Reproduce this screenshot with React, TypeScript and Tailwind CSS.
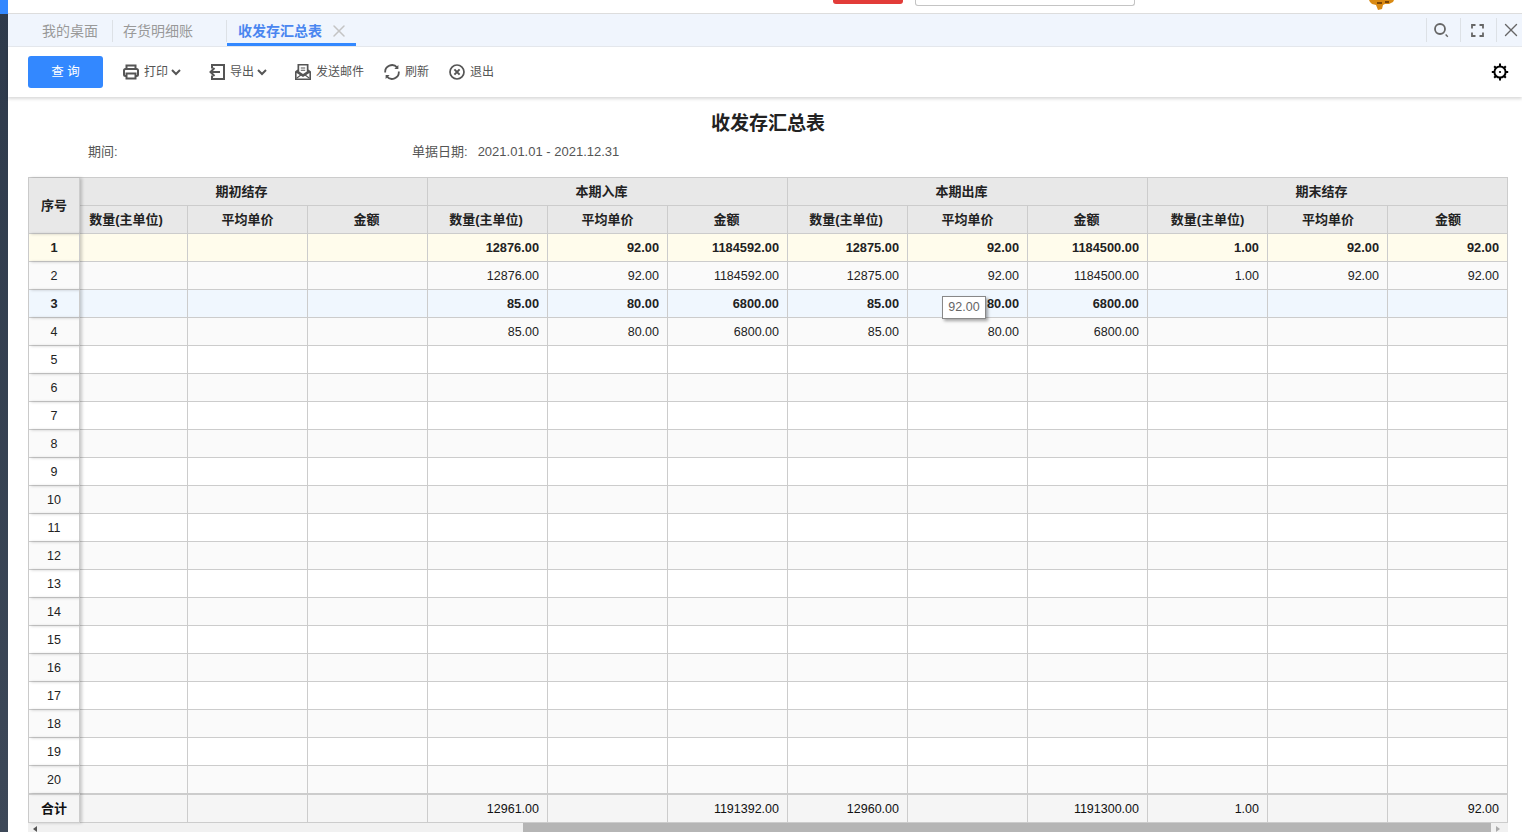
import { Fragment } from "react";
import { X } from "lucide-react";

const groups = [
  { name: "期初结存", pad: "pr-[24px]", subPad: ["pr-[15px]", "", "pr-[2px]"] },
  { name: "本期入库", pad: "pr-[12px]", subPad: ["pr-[3px]", "", "pr-[2px]"] },
  { name: "本期出库", pad: "pr-[12px]", subPad: ["pr-[3px]", "", "pr-[2px]"] },
  { name: "期末结存", pad: "pr-[12px]", subPad: ["", "pl-[1px]", "pl-[1px]"] },
];
const subCols = ["数量(主单位)", "平均单价", "金额"];

// 每行 12 列，空字符串表示无数据
const rows: Record<number, string[]> = {
  1: ["", "", "", "12876.00", "92.00", "1184592.00", "12875.00", "92.00", "1184500.00", "1.00", "92.00", "92.00"],
  2: ["", "", "", "12876.00", "92.00", "1184592.00", "12875.00", "92.00", "1184500.00", "1.00", "92.00", "92.00"],
  3: ["", "", "", "85.00", "80.00", "6800.00", "85.00", "80.00", "6800.00", "", "", ""],
  4: ["", "", "", "85.00", "80.00", "6800.00", "85.00", "80.00", "6800.00", "", "", ""],
};
const totals = ["", "", "", "12961.00", "", "1191392.00", "12960.00", "", "1191300.00", "1.00", "", "92.00"];
const emptyRow = Array(12).fill("");

function rowClass(n: number) {
  if (n === 1) return "bg-[#fffcec] font-bold text-[12.8px]";
  if (n === 3) return "bg-[#f0f7fe] font-bold text-[12.8px]";
  return n % 2 === 0 ? "bg-[#fafafa]" : "bg-white";
}

function PrintIcon() {
  return (
    <svg width="16" height="16" viewBox="0 0 16 16" fill="none" stroke="#555" strokeWidth="2">
      <path d="M3.5 5V1.5h9V5" />
      <rect x="1" y="5" width="14" height="7" rx="1.5" />
      <path d="M3.5 9.5h9v5h-9z" fill="#fff" />
    </svg>
  );
}

function ExportIcon() {
  return (
    <svg width="16" height="16" viewBox="0 0 16 16" fill="none" stroke="#555" strokeWidth="2">
      <path d="M3 4.5V1h12v14H3v-3.5" />
      <path d="M11 8H1.5M5.5 4 1.5 8l4 4" />
    </svg>
  );
}

function MailIcon() {
  return (
    <svg width="16" height="16" viewBox="0 0 16 16">
      <path d="M2.5 0h11v5.5L16 7.5V16H0V7.5l2.5-2z" fill="#555" />
      <path d="M4.2 1.6h7.6v6L8 10 4.2 7.6z" fill="#fff" />
      <path d="M1.6 9 8 13l6.4-4v5.4H1.6z" fill="#fff" />
      <path d="M1.6 14.2 6.2 10.8M14.4 14.2 9.8 10.8" stroke="#555" strokeWidth="1.1" />
      <path d="M5.8 4h4.4M5.8 6.2h4.4" stroke="#555" strokeWidth="1.1" />
    </svg>
  );
}

function RefreshIcon() {
  return (
    <svg width="16" height="16" viewBox="0 0 16 16" fill="none" stroke="#555" strokeWidth="1.8">
      <path d="M1.2 8.5A6.8 6.8 0 0 1 13.2 3.6" />
      <path d="M14.8 7.5A6.8 6.8 0 0 1 2.8 12.4" />
      <path d="M14.4 1v4h-4z" fill="#555" stroke="none" />
      <path d="M1.6 15v-4h4z" fill="#555" stroke="none" />
    </svg>
  );
}

function ExitIcon() {
  return (
    <svg width="16" height="16" viewBox="0 0 16 16" fill="none" stroke="#555">
      <circle cx="8" cy="8" r="7" strokeWidth="1.7" />
      <path d="M5.4 5.4l5.2 5.2M10.6 5.4l-5.2 5.2" strokeWidth="2" />
    </svg>
  );
}

function Caret() {
  return (
    <svg width="10" height="7" viewBox="0 0 10 7" fill="none" stroke="#555" strokeWidth="2" className="ml-[3px]">
      <path d="M1 1l4 4 4-4" />
    </svg>
  );
}

function SearchIcon() {
  return (
    <svg width="15" height="15" viewBox="0 0 15 15" fill="none" stroke="#666">
      <circle cx="6" cy="6" r="5" strokeWidth="1.8" />
      <path d="M11.6 11.6l2.2 2.2" strokeWidth="1.4" />
    </svg>
  );
}

function FullIcon() {
  return (
    <svg width="13" height="13" viewBox="0 0 13 13" fill="none" stroke="#666" strokeWidth="1.8">
      <path d="M4.5 1H1v3.5M8.5 1H12v3.5M4.5 12H1V8.5M8.5 12H12V8.5" />
    </svg>
  );
}

function GearIcon() {
  return (
    <svg width="18" height="18" viewBox="0 0 18 18" fill="none" stroke="#000">
      <circle cx="9" cy="9" r="5.6" strokeWidth="2" />
      <circle cx="9" cy="9" r="1.1" fill="#000" stroke="none" />
      <path d="M9 .5v3M9 14.5v3M.8 9h3M14.2 9h3M3.2 3.2l2 2M12.8 12.8l2 2M14.8 3.2l-2 2M5.2 12.8l-2 2" strokeWidth="2" />
    </svg>
  );
}

function Mascot() {
  return (
    <svg width="26" height="10" viewBox="0 0 26 10">
      <path d="M0 0h25l-1 2-4 2-4 0-2 1-1 4-4 1-2-5-4-1-2-2z" fill="#d98a14" />
      <path d="M8 2h5v2H8zM16 1h4v2h-4z" fill="#7a4507" />
    </svg>
  );
}

function ToolBtn({ icon, label, caret, className }: { icon: React.ReactNode; label: string; caret?: boolean; className?: string }) {
  return (
    <div className={`flex items-center text-[12px] text-[#555] ${className ?? ""}`}>
      {icon}
      <span className="ml-[5px]">{label}</span>
      {caret && <Caret />}
    </div>
  );
}

const cell = "border-r border-b border-[#cccccc] px-2";
const head = "border-r border-b border-[#cccccc] text-center font-bold text-[13px] text-[#222] bg-[#e8e8e8]";
const seqShadow = "relative z-10 shadow-[2px_0_3px_rgba(0,0,0,0.2)]";

export default function App() {
  const rowNos = Array.from({ length: 20 }, (_, i) => i + 1);

  return (
    <div className="flex h-[832px] w-[1522px] overflow-hidden bg-white font-['Liberation_Sans','Noto_Sans_CJK_SC',sans-serif]">
      {/* 左侧导航露出的一条 */}
      <div className="flex w-[8px] shrink-0 flex-col bg-gradient-to-b from-[#2e3a4b] to-[#3d4858]">
        <div className="h-[14px] bg-[#3388ff]" />
      </div>

      <div className="flex min-w-0 flex-1 flex-col">
        {/* 顶部栏（只露出底边） */}
        <div className="flex h-[14px] shrink-0 items-start border-b border-[#dddddd]">
          <div className="ml-[825px] h-[4px] w-[70px] rounded-b-[3px] bg-[#e23c39]" />
          <div className="ml-[12px] h-[6px] w-[220px] rounded-b-[3px] border-x border-b border-[#c4c4c4]" />
          <div className="ml-[234px]">
            <Mascot />
          </div>
        </div>

        {/* 页签 */}
        <div className="flex h-[33px] shrink-0 items-stretch border-b border-[#e6e9ee] bg-[#f0f5fd]">
          <div className="flex flex-1 items-end pl-[34px] text-[14px]">
            <span className="mb-[4px] h-[22px] w-[71px] border-r border-[#dde1e6] leading-[22px] text-[#999999]">我的桌面</span>
            <span className="mb-[4px] ml-[10px] h-[22px] w-[104px] border-r border-[#dde1e6] leading-[22px] text-[#999999]">存货明细账</span>
            <div className="flex h-[26px] w-[129px] items-start border-b-[3px] border-[#3388ff] pl-[11px]">
              <span className="font-bold leading-[22px] text-[#4a86f0]">收发存汇总表</span>
              <X size={20} strokeWidth={1.8} className="ml-[7px] mt-[1px] text-[#c4c4c4]" />
            </div>
          </div>
          <div className="flex items-center">
            <div className="flex h-[24px] w-[34px] items-center justify-center border-l border-[#dde1e6] pr-[4px]">
              <SearchIcon />
            </div>
            <div className="flex h-[24px] w-[36px] items-center justify-center border-l border-[#dde1e6] pr-[3px]">
              <FullIcon />
            </div>
            <div className="flex h-[24px] w-[26px] items-center justify-center border-l border-[#dde1e6] pl-[2px]">
              <X size={22} strokeWidth={1.5} className="shrink-0 text-[#666]" />
            </div>
          </div>
        </div>

        {/* 工具栏 */}
        <div className="z-20 flex h-[50px] shrink-0 items-center bg-white pl-[20px] pr-[13px] shadow-[0_2px_3px_rgba(0,0,0,0.15)]">
          <button className="h-[32px] w-[75px] rounded-[3px] bg-[#3388ff] text-[12.5px] text-white">查 询</button>
          <ToolBtn className="ml-[20px]" icon={<PrintIcon />} label="打印" caret />
          <ToolBtn className="ml-[28px]" icon={<ExportIcon />} label="导出" caret />
          <ToolBtn className="ml-[28px]" icon={<MailIcon />} label="发送邮件" />
          <ToolBtn className="ml-[20px]" icon={<RefreshIcon />} label="刷新" />
          <ToolBtn className="ml-[20px]" icon={<ExitIcon />} label="退出" />
          <div className="ml-auto">
            <GearIcon />
          </div>
        </div>

        {/* 报表内容 */}
        <div className="flex min-h-0 flex-1 flex-col pl-[20px] pr-[14px]">
          <h1 className="mt-[13px] h-[27px] text-center text-[19px] font-bold leading-[27px] text-[#222]">收发存汇总表</h1>
          <div className="mt-[5px] flex h-[20px] items-center text-[13px] text-[#555]">
            <span className="ml-[60px] w-[324px]">期间:</span>
            <span>单据日期:</span>
            <span className="ml-[10px]">2021.01.01 - 2021.12.31</span>
          </div>

          <table className="mt-[15px] w-[1480px] table-fixed border-separate border-spacing-0 border-l border-t border-[#cccccc] text-[12.5px] text-[#222]">
            <colgroup>
              <col className="w-[51px]" />
              <col className="w-[108px]" />
              {Array.from({ length: 11 }, (_, i) => (
                <col key={i} className="w-[120px]" />
              ))}
            </colgroup>
            <thead>
              <tr className="h-[28px]">
                <th rowSpan={2} className={`${head} ${seqShadow}`}>序号</th>
                {groups.map((g) => (
                  <th key={g.name} colSpan={3} className={`${head} ${g.pad}`}>{g.name}</th>
                ))}
              </tr>
              <tr className="h-[28px]">
                {groups.map((g) => (
                  <Fragment key={g.name}>
                    {subCols.map((c, i) => (
                      <th key={c} className={`${head} ${g.subPad[i]}`}>{c}</th>
                    ))}
                  </Fragment>
                ))}
              </tr>
            </thead>
            <tbody>
              {rowNos.map((n) => {
                const bold = n === 1 || n === 3;
                return (
                  <tr key={n} className={`h-[28px] ${rowClass(n)}`}>
                    <td className={`${cell} ${seqShadow} text-center ${bold ? "" : "pt-[1px]"}`}>{n}</td>
                    {(rows[n] ?? emptyRow).map((v, i) => (
                      <td key={i} className={`${cell} relative text-right ${bold ? "" : "pt-[1px]"}`}>
                        {v}
                        {n === 3 && i === 7 && (
                          <span className="absolute left-[34px] top-[6px] z-10 h-[23px] w-[44px] border border-[#888888] bg-white text-center text-[12.5px] font-normal leading-[21px] text-[#666666] shadow-[2px_2px_3px_rgba(0,0,0,0.35)]">
                            92.00
                          </span>
                        )}
                      </td>
                    ))}
                  </tr>
                );
              })}
              <tr className="h-[29px] bg-[#f5f5f5] text-[#111]">
                <td className={`${seqShadow} border-r border-b border-t border-[#cccccc] text-center text-[13px] font-bold`}>合计</td>
                {totals.map((v, i) => (
                  <td key={i} className={`${cell} border-t pt-[1px] text-right`}>{v}</td>
                ))}
              </tr>
            </tbody>
          </table>

          {/* 横向滚动条 */}
          <div className="flex h-[9px] w-[1480px] shrink-0 items-stretch bg-[#f1f1f1]">
            <div className="relative w-[495px]">
              <span className="absolute left-[5px] top-[3px] border-y-[3px] border-r-[4px] border-y-transparent border-r-[#555555]" />
            </div>
            <div className="w-[968px] bg-[#b5b5b5]" />
            <div className="relative flex-1">
              <span className="absolute left-[5px] top-[3px] border-y-[3px] border-l-[4px] border-y-transparent border-l-[#aaaaaa]" />
            </div>
          </div>
        </div>
      </div>
    </div>
  );
}
